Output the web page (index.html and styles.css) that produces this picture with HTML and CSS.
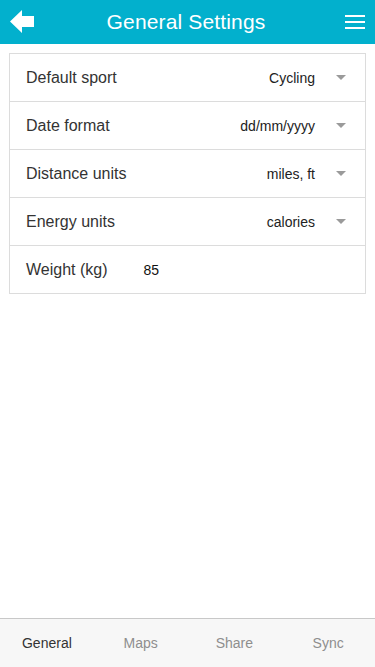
FILE: index.html
```html
<!DOCTYPE html>
<html>
<head>
<meta charset="utf-8">
<link rel="stylesheet" href="styles.css">
</head>
<body>
<div class="app">
  <header class="topbar">
    <button class="icon-btn back" aria-label="Back">
      <svg width="24" height="24" viewBox="0 0 24 24"><path d="M0 11.5 L12 0 L12 6 L24 6 L24 17 L12 17 L12 23 Z" fill="#fff"/></svg>
    </button>
    <h1 class="title">General Settings</h1>
    <button class="icon-btn menu" aria-label="Menu">
      <svg width="20" height="14" viewBox="0 0 20 14"><rect x="0" y="0" width="20" height="2" fill="#fff"/><rect x="0" y="6" width="20" height="2" fill="#fff"/><rect x="0" y="12" width="20" height="2" fill="#fff"/></svg>
    </button>
  </header>
  <main class="content">
    <div class="card">
      <div class="row">
        <span class="label">Default sport</span>
        <span class="select"><span class="value">Cycling</span><span class="caret"></span></span>
      </div>
      <div class="row">
        <span class="label">Date format</span>
        <span class="select"><span class="value">dd/mm/yyyy</span><span class="caret"></span></span>
      </div>
      <div class="row">
        <span class="label">Distance units</span>
        <span class="select"><span class="value">miles, ft</span><span class="caret"></span></span>
      </div>
      <div class="row">
        <span class="label">Energy units</span>
        <span class="select"><span class="value">calories</span><span class="caret"></span></span>
      </div>
      <div class="row row-input">
        <span class="label">Weight (kg)</span>
        <span class="input">85</span>
      </div>
    </div>
  </main>
  <nav class="tabbar">
    <span class="tab active">General</span>
    <span class="tab">Maps</span>
    <span class="tab">Share</span>
    <span class="tab">Sync</span>
  </nav>
</div>
</body>
</html>
```
FILE: styles.css
```css
* { box-sizing: border-box; }
html, body { margin: 0; padding: 0; }
body {
  font-family: "Liberation Sans", Arial, sans-serif;
  background: #fff;
  color: #333;
}
.app {
  width: 375px;
  height: 667px;
  display: flex;
  flex-direction: column;
}
.topbar {
  height: 44px;
  background: #02b0cd;
  display: flex;
  align-items: center;
  justify-content: space-between;
  padding: 0 10px 0 10px;
  flex: none;
}
.icon-btn {
  background: none;
  border: 0;
  padding: 0;
  display: flex;
  align-items: center;
  justify-content: center;
}
.back { width: 24px; height: 24px; margin-top: -1px; }
.menu { width: 20px; height: 14px; }
.title {
  margin: 0 7px 0 0;
  color: #fff;
  font-weight: normal;
  font-size: 21px;
  letter-spacing: 0.15px;
}
.content {
  flex: 1;
  padding: 9px 9px 0 9px;
}
.card {
  border: 1px solid #dcdcdc;
}
.row {
  height: 48px;
  display: flex;
  align-items: center;
  padding: 0 19px 0 16px;
  border-bottom: 1px solid #dcdcdc;
}
.row:last-child { border-bottom: 0; height: 47px; }
.label {
  font-size: 16px;
  color: #333;
  flex: 1;
}
.select {
  display: flex;
  align-items: center;
}
.value {
  font-size: 14px;
  color: #222;
}
.caret {
  width: 0;
  height: 0;
  border-left: 5px solid transparent;
  border-right: 5px solid transparent;
  border-top: 5px solid #9a9a9a;
  margin-left: 21px;
}
.row-input .label { flex: none; }
.input {
  font-size: 14px;
  color: #111;
  margin-left: 36px;
}
.tabbar {
  flex: none;
  height: 49px;
  border-top: 1px solid #c8c8c8;
  background: #f7f7f7;
  display: grid;
  grid-template-columns: repeat(4, 1fr);
  align-items: center;
}
.tab {
  text-align: center;
  font-size: 14px;
  color: #8e8e8e;
}
.tab.active { color: #333; }
```
